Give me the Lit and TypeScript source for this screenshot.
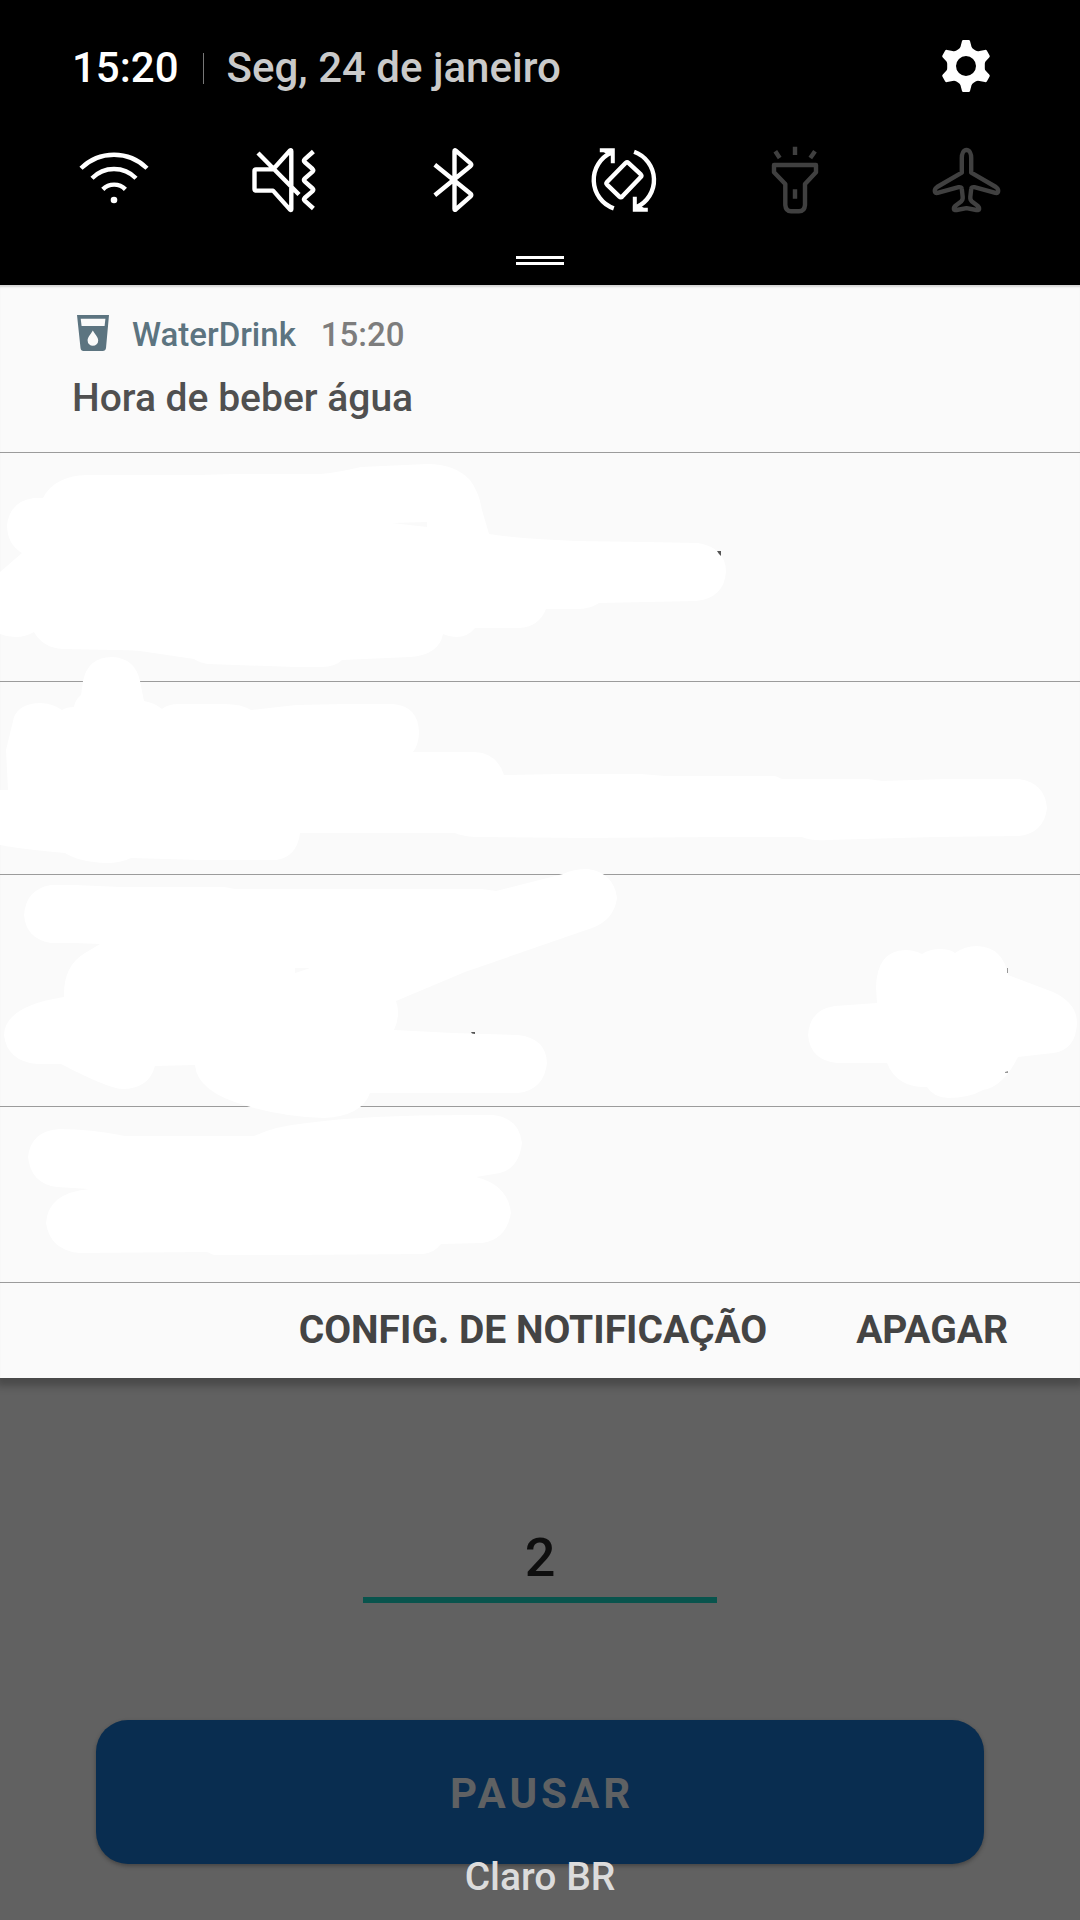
import { LitElement, html, svg, css } from "lit";
import { customElement, property } from "lit/decorators.js";

interface Toggle {
  label: string;
  on: boolean;
  art: unknown;
}

const toggles: Toggle[] = [
  {
    label: "Wi-Fi",
    on: true,
    art: svg`<path d="M3 24.3A46.8 46.8 0 0 1 69 24.3M14 34.3A30.7 30.7 0 0 1 58 34.3M24.8 45.4A15.7 15.7 0 0 1 47.4 45.4"/><circle cx="36" cy="56" r="3.3" fill="currentColor" stroke="none"/>`,
  },
  {
    label: "Vibrar",
    on: true,
    art: svg`<path d="M8 25.4H25L42 6.6Q43.3 5.6 43.3 7.2V65.2Q43.3 66.6 42 65.6L25 46.6H8Q6.5 46.6 6.5 45.1V26.9Q6.5 25.4 8 25.4ZM10 9L51 50.5M65.4 7.5L56.6 15.4Q55.2 16.7 56.6 18L64.6 25Q66 26.3 64.6 27.6L56.6 34.7Q55.2 36 56.6 37.3L64.6 44.5Q66 45.8 64.6 47.1L56.6 54Q55.2 55.3 56.6 56.6L65.4 64.5"/>`,
  },
  {
    label: "Bluetooth",
    on: true,
    art: svg`<path d="M15.8 20.7L51.6 49.7Q53 51 51.6 52.3L36.8 65.4Q35.5 66.4 35.5 65V7.2Q35.5 5.7 36.8 6.7L51.6 19.4Q53 20.7 51.6 22L15.8 51.3"/>`,
  },
  {
    label: "Rotação automática",
    on: true,
    art: svg`<path d="M24.8 64.3A30 30 0 0 1 22.5 8.6M45.1 7.7A30 30 0 0 1 47.3 63.3"/><path d="M10.8 4.3H25.8V19.3H21.8V11.5L14.5 8.3H10.8ZM58.8 67.7H43.8V52.7H47.8V60.5L55 63.7H58.8Z" fill="currentColor" stroke="none"/><path d="M36.8 18.8Q38.1 17.6 39.4 18.8L51.8 30.4Q53 31.7 51.8 33L33.2 52.6Q31.8 54 30.4 52.6L18 40.6Q16.8 39.3 18 38Z"/>`,
  },
  {
    label: "Lanterna",
    on: false,
    art: svg`<path d="M36 2.7V11M16.3 7.3L20.7 14M56 7.3L51.3 14M36 45.3V54.7M15 21H57V28.3L46 40V61Q45.5 67.3 40 67.3H32Q26.8 67.3 26.3 61V40L15 28.3Z"/>`,
  },
  {
    label: "Modo avião",
    on: false,
    art: svg`<path d="M36.5 6C33.4 6 31.8 10 31.8 14V28.7L7.1 43Q4.8 44.5 4.8 47Q4.8 49.4 7.6 48.9L28.6 43.2Q31.6 42.6 31.8 45L32.7 53Q32.9 56 31.1 57.5L26.1 61.2Q23.6 63 23.9 65Q24.2 66.6 26.6 66L36.5 64.2L46.4 66Q48.8 66.6 49.1 65Q49.4 63 46.9 61.2L41.9 57.5Q40.1 56 40.3 53L41.2 45Q41.4 42.6 44.4 43.2L65.4 48.9Q68.2 49.4 68.2 47Q68.2 44.5 65.9 43L41.2 28.7V14C41.2 10 39.6 6 36.5 6Z"/>`,
  },
];

@customElement("quick-toggle")
class QuickToggle extends LitElement {
  @property({ attribute: false }) item!: Toggle;

  static styles = css`
    :host {
      display: flex;
      justify-content: center;
    }
    .toggle {
      padding: 0;
      border: 0;
      background: none;
      color: #fff;
    }
    .toggle.off {
      color: #404040;
    }
    .glyph {
      display: block;
      width: 72px;
      height: 72px;
      fill: none;
      stroke: currentColor;
      stroke-width: 4.4;
      stroke-linejoin: round;
    }
  `;

  render() {
    return html`<button
      class="toggle ${this.item.on ? "on" : "off"}"
      aria-label=${this.item.label}
      aria-pressed=${this.item.on ? "true" : "false"}
    >
      <svg class="glyph" viewBox="0 0 72 72">${this.item.art}</svg>
    </button>`;
  }
}

@customElement("quick-panel")
class QuickPanel extends LitElement {
  static styles = css`
    :host {
      display: flex;
      flex-direction: column;
      background: #000;
      padding: 40px 0 20px;
      color: #fff;
    }
    .top {
      display: flex;
      align-items: center;
      height: 56px;
      padding: 0 88px 0 72px;
      font-size: 42px;
      line-height: 50px;
      font-weight: 500;
    }
    .rule {
      width: 1px;
      height: 31px;
      margin: 0 23px 0 24px;
      background: #777;
    }
    .date {
      flex: 1;
      color: #cacaca;
    }
    .settings {
      align-self: flex-start;
      padding: 0;
      border: 0;
      background: none;
      color: #fff;
    }
    .gear {
      display: block;
      width: 52px;
      height: 52px;
      fill: currentColor;
    }
    .toggles {
      display: grid;
      grid-template-columns: repeat(6, 1fr);
      margin-top: 48px;
      padding: 0 29px;
    }
    .handle {
      align-self: center;
      box-sizing: border-box;
      width: 48px;
      height: 9px;
      margin-top: 40px;
      border: solid #fff;
      border-width: 3px 0;
    }
  `;

  render() {
    return html`
      <div class="top">
        <time class="time">15:20</time>
        <span class="rule"></span>
        <span class="date">Seg, 24 de janeiro</span>
        <button class="settings" aria-label="Configurações">
          <svg class="gear" viewBox="-26 -26 52 52">
            <path
              fill-rule="evenodd"
              d="M-2.6-26H2.6Q3.8-26 4-25L5.5-19.2Q6-17.4 8-16.4L10-15.2Q11.5-14.5 13.5-15L18.8-16.1Q20.2-16.4 20.8-15.4L23.6-10.6Q24.2-9.6 23.2-8.6L19.5-4.6Q18.7-3.6 18.8-2V2Q18.7 3.6 19.5 4.6L23.2 8.6Q24.2 9.6 23.6 10.6L20.8 15.4Q20.2 16.4 18.8 16.1L13.5 15Q11.5 14.5 10 15.2L8 16.4Q6 17.4 5.5 19.2L4 25Q3.8 26 2.6 26H-2.6Q-3.8 26-4 25L-5.5 19.2Q-6 17.4-8 16.4L-10 15.2Q-11.5 14.5-13.5 15L-18.8 16.1Q-20.2 16.4-20.8 15.4L-23.6 10.6Q-24.2 9.6-23.2 8.6L-19.5 4.6Q-18.7 3.6-18.8 2V-2Q-18.7-3.6-19.5-4.6L-23.2-8.6Q-24.2-9.6-23.6-10.6L-20.8-15.4Q-20.2-16.4-18.8-16.1L-13.5-15Q-11.5-14.5-10-15.2L-8-16.4Q-6-17.4-5.5-19.2L-4-25Q-3.8-26-2.6-26ZM0-10A10 10 0 1 0 0 10A10 10 0 1 0 0-10Z"
            />
          </svg>
        </button>
      </div>
      <div class="toggles">
        ${toggles.map((t) => html`<quick-toggle .item=${t}></quick-toggle>`)}
      </div>
      <span class="handle"></span>
    `;
  }
}

@customElement("notification-list")
class NotificationList extends LitElement {
  static styles = css`
    :host {
      display: block;
      position: relative;
      background: #fafafa;
      box-shadow: inset 0 3px 2px -1px #d4d4d4, 0 4px 8px 4px rgba(0, 0, 0, 0.25);
    }
    .list {
      position: relative;
    }
    .item {
      border-bottom: 1px solid #9b9b9b;
    }
    .message {
      display: flex;
      flex-direction: column;
      gap: 20px;
      padding: 30px 72px 31px;
      font-weight: 500;
    }
    .source {
      display: flex;
      align-items: center;
      font-size: 33px;
      line-height: 40px;
      color: #5c7480;
    }
    .glass {
      width: 42px;
      height: 40px;
      margin-right: 18px;
      fill: currentColor;
    }
    .when {
      margin-left: 25px;
      color: #7d7d7d;
    }
    .title {
      margin: 0;
      font-size: 39px;
      line-height: 46px;
      font-weight: 500;
      color: #505050;
    }
    .a {
      height: 228px;
    }
    .b {
      height: 192px;
    }
    .c {
      height: 231px;
    }
    .d {
      height: 175px;
    }
    .cover {
      position: absolute;
      left: 0;
      bottom: 0;
      width: 100%;
      height: 830px;
      fill: #fff;
      pointer-events: none;
    }
    .gap {
      fill: #fafafa;
    }
    .speck {
      fill: #555;
    }
    .speck.pale {
      fill: #999;
    }
    .actions {
      display: flex;
      justify-content: flex-end;
      align-items: center;
      gap: 89px;
      padding: 24px 72px 25px;
    }
    .action {
      padding: 0;
      border: 0;
      background: none;
      font: bold 39px/46px Roboto, "Liberation Sans", sans-serif;
      color: #444;
    }
  `;

  render() {
    return html`
      <div class="list">
        <article class="item message">
          <div class="source">
            <svg class="glass" viewBox="0 0 42 40">
              <path
                fill-rule="evenodd"
                d="M5 0H37L34 33Q33.6 36 30.7 36H11.6Q8.8 36 8.5 33ZM8.7 3.8L9.6 11H32.6L33.4 3.8ZM20.8 15.6C19.5 18.2 15.6 22.2 15.6 25.4A5.3 5.3 0 0 0 26.2 25.4C26.2 22.2 22.2 18.2 20.8 15.6Z"
              />
            </svg>
            <span>WaterDrink</span>
            <time class="when">15:20</time>
          </div>
          <h2 class="title">Hora de beber água</h2>
        </article>
        <article class="item a"></article>
        <article class="item b"></article>
        <article class="item c"></article>
        <article class="item d"></article>
        <svg class="cover" viewBox="0 453 1080 830" preserveAspectRatio="none" aria-hidden="true">
          <path d="M43 498Q54 476 87 475L199 475L235 474L320 474Q335 473 361 467L427 464Q455 464 470 480Q479 492 482 510L489 534Q515 538 538 539L575 541L645 542L698 543Q726 548 726 572Q724 598 696 601L599 603Q590 609 577 609H546Q539 627 519 628H475Q468 637 456 637Q449 637 443 634Q439 655 410 657L342 660Q335 667 322 667H295L208 664Q200 663 194 659L140 651Q125 650 116 650L63 649Q43 648 34 632Q26 637 15 637Q7 637 0 634V572L22 553Q7 544 7 525Q10 501 34 498Z" />
          <path d="M14 717Q20 703 41 703Q54 704 62 710Q67 707 74 707Q75 700 81 695L83 681Q88 657 112 657Q135 658 140 681L144 701Q155 703 162 709Q168 704 179 704H224Q242 704 251 710L296 705L345 704H393Q418 706 419 732Q419 744 413 752H475Q497 753 504 775L560 774L641 774L665 776H775L782 779H868L882 781L945 779H1019Q1045 783 1047 808Q1044 833 1019 836L935 837L827 840Q812 841 802 837H720L585 838L475 837Q462 836 455 833H300Q297 857 276 860H200L131 858Q121 863 107 863Q79 862 65 853Q20 849 0 845V790H8L6 750Z" />
          <path d="M24 915Q26 889 51 885H75L120 887H224L235 889H482L496 891L563 874Q573 869 588 869Q614 873 617 898Q614 920 592 928L465 972L396 1001Q401 1015 394 1030L453 1033L518 1035Q546 1038 547 1063Q544 1090 518 1093H370Q362 1116 324 1118Q285 1117 247 1106Q197 1092 195 1065L155 1066Q149 1089 122 1089Q107 1088 61 1064H37Q7 1061 4 1035Q5 1006 64 997Q63 966 85 953L100 944L75 943H51Q26 939 24 915Z" />
          <path d="M808 1035Q810 1009 835 1006L877 1003L876 987Q877 951 905 950Q914 950 922 954Q930 949 940 949Q950 949 955 953Q965 946 977 946Q1003 947 1008 975L1053 992Q1077 1003 1077 1023Q1076 1050 1053 1053L1018 1057Q1003 1087 983 1090Q969 1098 948 1098Q933 1097 927 1087Q897 1088 887 1063H837Q810 1060 808 1035Z" />
          <path d="M28 1157Q31 1131 59 1129Q91 1129 125 1136H254Q275 1126 307 1123Q370 1114 493 1115Q519 1118 522 1143Q519 1168 500 1173L476 1177Q508 1185 511 1213Q506 1240 482 1243L441 1244Q434 1253 423 1254L290 1255H214L207 1252L79 1253Q50 1250 46 1223Q48 1193 89 1189L57 1187Q31 1184 28 1157Z" />
          <path class="gap" d="M392 523L427 522V527ZM295 968H310L295 973Z" />
          <path class="speck" d="M717 551H721V556L719 554ZM471 1032H475V1034L472 1033.5Z" />
          <path class="speck pale" d="M1007 968H1008V973H1007ZM1005 1072L1008 1071V1073H1005Z" />
        </svg>
      </div>
      <div class="actions">
        <button class="action">CONFIG. DE NOTIFICAÇÃO</button>
        <button class="action">APAGAR</button>
      </div>
    `;
  }
}

@customElement("app-root")
class AppRoot extends LitElement {
  static styles = css`
    :host {
      display: flex;
      flex-direction: column;
      position: relative;
      min-height: 100vh;
      background: #616161;
      font-family: Roboto, "Liberation Sans", sans-serif;
    }
    .behind {
      display: flex;
      flex-direction: column;
      align-items: center;
      gap: 117px;
      padding: 147px 96px 56px;
    }
    .amount {
      box-sizing: border-box;
      width: 354px;
      height: 78px;
      padding: 0 0 8px;
      border: 0;
      border-bottom: 6px solid #09544d;
      border-radius: 0;
      outline: 0;
      background: none;
      font: 500 54px/64px Roboto, "Liberation Sans", sans-serif;
      text-align: center;
      color: #0e0e0e;
    }
    .pause {
      width: 100%;
      height: 144px;
      padding: 4px 0 0 4px;
      border: 0;
      border-radius: 32px;
      background: #092d50;
      box-shadow: 0 2px 4px rgba(0, 0, 0, 0.3);
      font: bold 42px/50px Roboto, "Liberation Sans", sans-serif;
      letter-spacing: 4px;
      color: #5f6163;
    }
    .carrier {
      position: absolute;
      left: 0;
      right: 0;
      bottom: 20px;
      text-align: center;
      font-size: 39px;
      line-height: 46px;
      font-weight: 500;
      color: #dcdcdc;
    }
  `;

  render() {
    return html`
      <quick-panel></quick-panel>
      <notification-list></notification-list>
      <main class="behind">
        <input class="amount" type="text" inputmode="numeric" aria-label="Quantidade" .value=${"2"} />
        <button class="pause">PAUSAR</button>
      </main>
      <div class="carrier">Claro BR</div>
    `;
  }
}
